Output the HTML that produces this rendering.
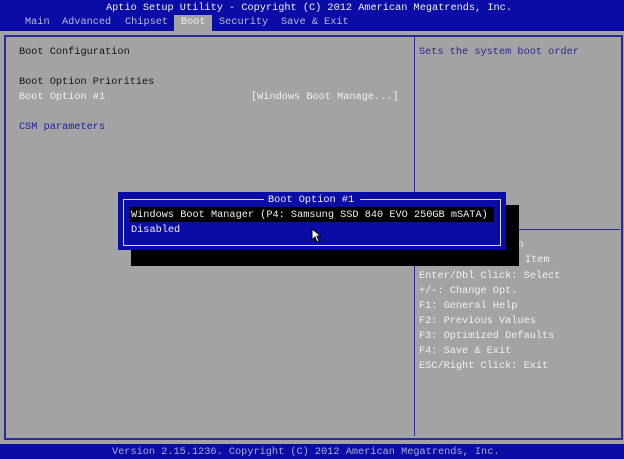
<!DOCTYPE html><html><head><style>
body{margin:0;width:624px;height:459px;background:#a3a3a3;position:relative;overflow:hidden;font-family:"Liberation Mono",monospace;font-size:10.25px;}
div{position:absolute;white-space:pre;line-height:12px;}
.w{color:#f0f0f0}.k{color:#141414}.b{color:#1c1ca0}.h{color:#f0f0f0}.m{color:#b8b8d8;top:16px}
</style></head><body>
<div style="left:0;top:0;width:624px;height:31px;background:#0a0ca6"></div>
<div style="left:174px;top:15px;width:38px;height:16px;background:#a3a3a3"></div>
<div class="w" style="left:106px;top:2px">Aptio Setup Utility - Copyright (C) 2012 American Megatrends, Inc.</div>
<div class="m" style="left:25px">Main</div>
<div class="m" style="left:62px">Advanced</div>
<div class="m" style="left:125px">Chipset</div>
<div class="m" style="left:219px">Security</div>
<div class="m" style="left:281px">Save &amp; Exit</div>
<div class="w" style="left:181px;top:16px">Boot</div>
<div style="left:4px;top:35px;width:615px;height:401px;border:2px solid #2a2a9a"></div>
<div style="left:414px;top:36px;width:1px;height:400px;background:#2a2a9a"></div>
<div style="left:415px;top:229px;width:205px;height:1px;background:#2a2a9a"></div>
<div class="k" style="left:19px;top:46px">Boot Configuration</div>
<div class="k" style="left:19px;top:76px">Boot Option Priorities</div>
<div class="w" style="left:19px;top:91px">Boot Option #1</div>
<div class="w" style="left:251px;top:91px">[Windows Boot Manage...]</div>
<div class="b" style="left:19px;top:121px">CSM parameters</div>
<div style="left:419px;top:46px;color:#2a2a8a">Sets the system boot order</div>
<div class="h" style="left:419px;top:239px">&gt;&lt;: Select Screen</div>
<div class="h" style="left:525px;top:254px">Item</div>
<div style="left:419px;top:269px;line-height:15px" class="h">Enter/Dbl Click: Select
+/-: Change Opt.
F1: General Help
F2: Previous Values
F3: Optimized Defaults
F4: Save &amp; Exit
ESC/Right Click: Exit</div>
<div style="left:0;top:444px;width:624px;height:15px;background:#0a0ca6"></div>
<div style="left:112px;top:446px;color:#a8a8d8">Version 2.15.1236. Copyright (C) 2012 American Megatrends, Inc.</div>
<div style="left:131px;top:205px;width:388px;height:61px;background:#000"></div>
<div style="left:118px;top:192px;width:388px;height:58px;background:#0a0ca6"></div>
<div style="left:123px;top:199px;width:376px;height:45px;border:1px solid #d8d8e8"></div>
<div style="left:264px;top:193px;width:96px;height:12px;background:#0a0ca6"></div>
<div class="w" style="left:268px;top:194px">Boot Option #1</div>
<div style="left:130px;top:207px;width:364px;height:15px;background:#000"></div>
<div class="w" style="left:131px;top:209px">Windows Boot Manager (P4: Samsung SSD 840 EVO 250GB mSATA)</div>
<div class="w" style="left:131px;top:224px">Disabled</div>
<svg style="position:absolute;left:311px;top:228px" width="10" height="16"><path d="M1 1L1 12L4 9L6 14L8 13L6 8L10 8Z" fill="#fff" stroke="#000" stroke-width="1"/></svg>
</body></html>
